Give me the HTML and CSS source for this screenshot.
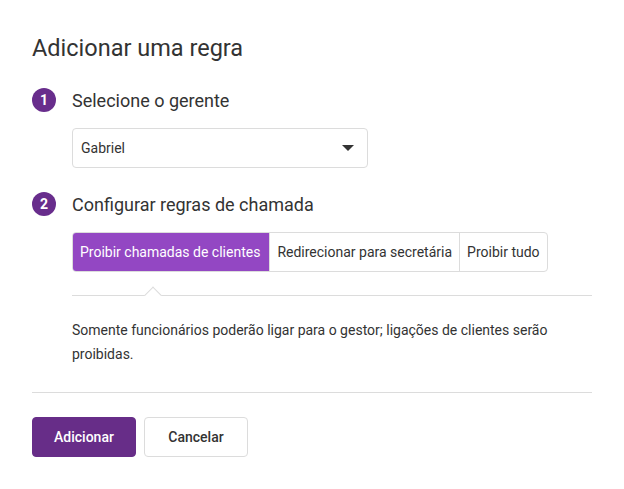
FILE: index.html
```html
<!DOCTYPE html>
<html lang="pt">
<head>
<meta charset="utf-8">
<link rel="stylesheet" href="styles.css">
</head>
<body>
<div class="dialog">
  <h1 class="title">Adicionar uma regra</h1>
  <div class="step">
    <div class="step-head"><span class="num">1</span><span class="step-label">Selecione o gerente</span></div>
    <div class="step-body">
      <div class="select"><span>Gabriel</span><span class="caret"></span></div>
    </div>
  </div>
  <div class="step">
    <div class="step-head"><span class="num">2</span><span class="step-label">Configurar regras de chamada</span></div>
    <div class="step-body">
      <div class="tabs">
        <div class="tab active">Proibir chamadas de clientes</div>
        <div class="tab">Redirecionar para secretária</div>
        <div class="tab">Proibir tudo</div>
      </div>
      <div class="rule"><span class="notch"></span></div>
      <p class="desc">Somente funcionários poderão ligar para o gestor; ligações de clientes serão proibidas.</p>
    </div>
  </div>
  <div class="divider"></div>
  <div class="actions">
    <button class="btn primary">Adicionar</button>
    <button class="btn">Cancelar</button>
  </div>
</div>
</body>
</html>
```
FILE: styles.css
```css
html, body { margin: 0; padding: 0; background: #fff; }
body { font-family: Roboto, "Noto Sans", sans-serif; color: #333; }
.dialog { padding: 32px 32px 0 32px; }
.title { margin: 0; font-size: 23.5px; font-weight: 400; line-height: 32px; color: #333; }
.step { margin-top: 24px; }
.step-head { display: flex; align-items: center; height: 24px; }
.num { width: 24px; height: 24px; border-radius: 50%; background: #682d8c; color: #fff; font-size: 14px; font-weight: 700; display: flex; align-items: center; justify-content: center; }
.step-label { margin-left: 16px; font-size: 18px; color: #333; }
.step-body { margin-left: 40px; margin-top: 16px; }
.select { width: 296px; height: 40px; box-sizing: border-box; border: 1px solid #dcdcdc; border-radius: 4px; display: flex; align-items: center; justify-content: space-between; padding: 0 13px 0 8px; font-size: 14px; color: #333; }
.caret { width: 0; height: 0; border-left: 6px solid transparent; border-right: 6px solid transparent; border-top: 6px solid #333; }
.tabs { display: inline-flex; height: 40px; border: 1px solid #dcdcdc; border-radius: 4px; box-sizing: border-box; overflow: hidden; }
.tab { display: flex; align-items: center; padding: 0 7px; font-size: 14px; color: #333; border-left: 1px solid #dcdcdc; }
.tab:first-child { border-left: none; }
.tab.active { background: #9347c3; color: #fff; margin: -1px 0 -1px -1px; padding: 0 9px 0 8px; }
.rule { position: relative; height: 1px; background: #dcdcdc; margin-top: 23px; }
.notch { position: absolute; left: 75px; top: -6px; width: 11px; height: 11px; background: #fff; border-left: 1px solid #dcdcdc; border-top: 1px solid #dcdcdc; transform: rotate(45deg); }
.desc { margin: 22px 0 0 0; font-size: 14px; line-height: 24px; color: #333; }
.divider { height: 1px; background: #dcdcdc; margin-top: 26px; }
.actions { display: flex; gap: 8px; margin-top: 24px; }
.btn { width: 104px; height: 40px; border-radius: 4px; border: 1px solid #dcdcdc; background: #fff; font-family: Roboto, sans-serif; font-size: 14px; font-weight: 500; color: #333; cursor: pointer; }
.btn.primary { background: #672d88; border-color: #672d88; color: #fff; }
```
